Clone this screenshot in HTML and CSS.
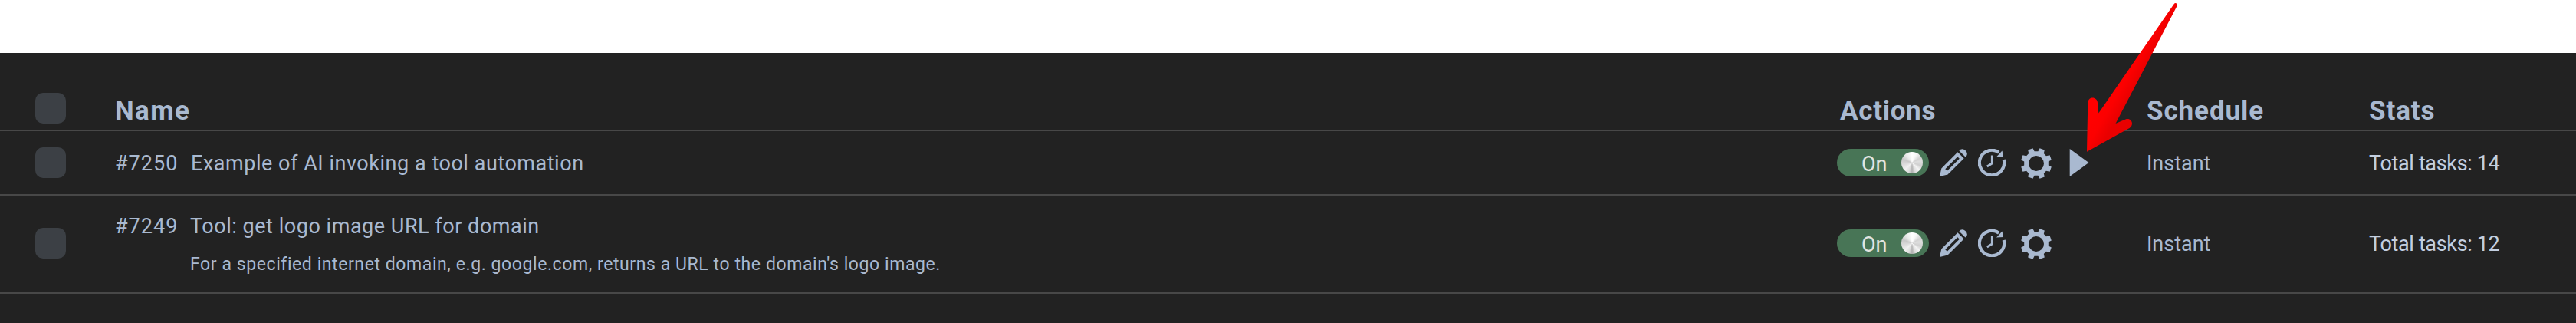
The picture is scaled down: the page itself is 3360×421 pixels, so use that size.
FILE: index.html
```html
<!DOCTYPE html>
<html lang="en">
<head>
    <meta charset="UTF-8">
    <meta name="viewport" content="width=device-width, initial-scale=1.0">
    <title>Automations</title>
    <link rel="stylesheet" href="styles.css">
</head>
<body>
    <!-- shared icons -->
    <svg class="sprite" width="0" height="0">
        <symbol id="icon-edit" viewBox="0 0 36 36">
            <path fill-rule="evenodd" d="M0 36 L2.3 25.5 L23.5 4.3 L31.6 12.4 L10.5 33.6 Z M7.3 26.2 L9.8 28.7 L25.8 12.7 L23.3 10.2 Z"/>
            <path d="M25.4 2.5 L27.3 .7 Q30.5 -.8 33.5 2 Q37 5.2 35.3 8.7 L33.5 10.6 Z"/>
        </symbol>
        <symbol id="icon-history" viewBox="0 0 36 36">
            <path class="line" d="M27.2 4.7 A16.2 16.2 0 1 0 33.7 14"/>
            <path d="M31.5 2.5 L33 10 L24 10.5 Z"/>
            <path class="line thin" d="M18.4 8.5 V19 L11.8 23"/>
        </symbol>
        <symbol id="icon-gear" viewBox="0 0 40 40">
            <path fill-rule="evenodd" d="M22.4 4.2 L24.5 .2 L30.8 2.4 L29.8 7.1 L32.9 10.2 L37.6 9.2 L39.8 15.5 L35.8 17.6 V22.4 L39.8 24.5 L37.6 30.8 L32.9 29.8 L29.8 32.9 L30.8 37.6 L24.5 39.8 L22.4 35.8 H17.6 L15.5 39.8 L9.2 37.6 L10.2 32.9 L7.1 29.8 L2.4 30.8 L.2 24.5 L4.2 22.4 V17.6 L.2 15.5 L2.4 9.2 L7.1 10.2 L10.2 7.1 L9.2 2.4 L15.5 .2 L17.6 4.2 Z M20 10 A10 10 0 1 0 20 30 A10 10 0 1 0 20 10 Z"/>
        </symbol>
        <symbol id="icon-run" viewBox="0 0 26 36">
            <path d="M.7 0 L25.5 18 L.7 36 Z"/>
        </symbol>
    </svg>

    <div class="automations">
        <div class="row head">
            <span class="checkbox"></span>
            <span class="th-name">Name</span>
            <span class="th-actions">Actions</span>
            <span>Schedule</span>
            <span>Stats</span>
        </div>

        <div class="row">
            <span class="checkbox"></span>
            <div class="name">
                <span class="id">#7250</span>
                <span class="title">Example of AI invoking a tool automation</span>
            </div>
            <div class="actions">
                <span class="toggle"><span class="label">On</span><span class="knob"></span></span>
                <svg class="icon edit"><use href="#icon-edit"/></svg>
                <svg class="icon history"><use href="#icon-history"/></svg>
                <svg class="icon gear"><use href="#icon-gear"/></svg>
                <svg class="icon run"><use href="#icon-run"/></svg>
            </div>
            <span class="schedule">Instant</span>
            <span class="stats">Total tasks: 14</span>
        </div>

        <div class="row tall">
            <span class="checkbox"></span>
            <div class="name">
                <span class="id">#7249</span>
                <div class="info">
                    <span class="title">Tool: get logo image URL for domain</span>
                    <span class="desc">For a specified internet domain, e.g. google.com, returns a URL to the domain's logo image.</span>
                </div>
            </div>
            <div class="actions">
                <span class="toggle"><span class="label">On</span><span class="knob"></span></span>
                <svg class="icon edit"><use href="#icon-edit"/></svg>
                <svg class="icon history"><use href="#icon-history"/></svg>
                <svg class="icon gear"><use href="#icon-gear"/></svg>
            </div>
            <span class="schedule">Instant</span>
            <span class="stats">Total tasks: 12</span>
        </div>
    </div>

    <!-- pointer to the run button -->
    <svg class="pointer" viewBox="0 0 120 200">
        <defs>
            <linearGradient id="red" gradientUnits="userSpaceOnUse" x1="34" y1="112" x2="58" y2="126">
                <stop offset="0" stop-color="#ff0000"/>
                <stop offset=".45" stop-color="#fc0000"/>
                <stop offset="1" stop-color="#e90000"/>
            </linearGradient>
        </defs>
        <path fill="url(#red)" d="M2 197.7 L3.3 134 C4 125 15.5 126 16 134 L17.3 147.5 L115.6 5.3 C117.5 2.5 121 5 119.5 8 L39.5 161 L52.5 155.5 C60 153 64.5 162 57.5 167 Z"/>
    </svg>
</body>
</html>
```
FILE: styles.css
```css
* {
    box-sizing: border-box;
}
body {
    margin: 0;
    padding-top: 69px;
    height: 421px;
    overflow: hidden;
    background: #fff;
    color: #a9b9d0;
    font-family: Roboto, sans-serif;
    font-size: 27px;
    line-height: 36px;
}
.sprite {
    position: absolute;
}
.automations {
    height: 352px;
    background: #222;
}
.row {
    display: grid;
    grid-template-columns: 104px 2246px 404px 290px 1fr;
    align-items: center;
    height: 84px;
    padding-left: 46px;
    border-bottom: 2px solid #484848;
}
.row.tall {
    height: 128px;
    padding-bottom: 2px;
}
.row.head {
    height: 102px;
    padding-top: 44px;
    font-size: 35px;
    font-weight: 700;
    letter-spacing: 0.9px;
}
.head > span:not(.checkbox) {
    padding-top: 7px;
}
.head .th-name {
    letter-spacing: 1.4px;
}
.head .th-actions {
    padding-left: 4px;
    letter-spacing: 0.7px;
}
.checkbox {
    width: 40px;
    height: 40px;
    border-radius: 10px;
    background: #3c4045;
}

/* name column */
.name {
    display: flex;
    padding-top: 2px;
}
.tall .name {
    padding-top: 5px;
}
.id {
    width: 99px;
    letter-spacing: 1px;
}
.tall .id {
    width: 98px;
}
.title {
    letter-spacing: 0.53px;
}
.info {
    display: flex;
    flex-direction: column;
    gap: 14px;
}
.desc {
    font-size: 23px;
    letter-spacing: 0.58px;
}
.schedule,
.stats {
    padding-top: 2px;
}
.stats {
    color: #c3cfe0;
    letter-spacing: -0.35px;
}

/* action buttons */
.actions {
    display: flex;
    align-items: center;
}
.toggle {
    display: flex;
    align-items: center;
    justify-content: space-between;
    width: 120px;
    height: 36px;
    padding: 0 8px 0 32px;
    border-radius: 18px;
    background: #487556;
    color: #e2e5e1;
}
.label {
    padding-top: 3px;
}
.knob {
    width: 28px;
    height: 28px;
    border-radius: 50%;
    background: conic-gradient(#fff 0deg, #f8f8f8 25deg, #d2d2d2 60deg, #dedede 80deg, #d0d0d0 110deg, #f4f4f4 135deg, #ddd 160deg, #b0b0b0 180deg, #ddd 200deg, #f0f0f0 225deg, #ddd 255deg, #c8c8c8 290deg, #e8e8e8 320deg, #fff 360deg);
}
.icon {
    width: 36px;
    height: 36px;
    fill: #a9b9d0;
}
.edit,
.history {
    margin-left: 14px;
}
#icon-history .line {
    fill: none;
    stroke: #a9b9d0;
    stroke-width: 4.2;
}
#icon-history .thin {
    stroke-width: 3;
}
.gear {
    width: 40px;
    height: 40px;
    margin-left: 20px;
    margin-top: 1px;
}
.run {
    width: 26px;
    margin-left: 23px;
}

.pointer {
    position: absolute;
    left: 2720px;
    top: 0;
    width: 120px;
    height: 200px;
}
```
